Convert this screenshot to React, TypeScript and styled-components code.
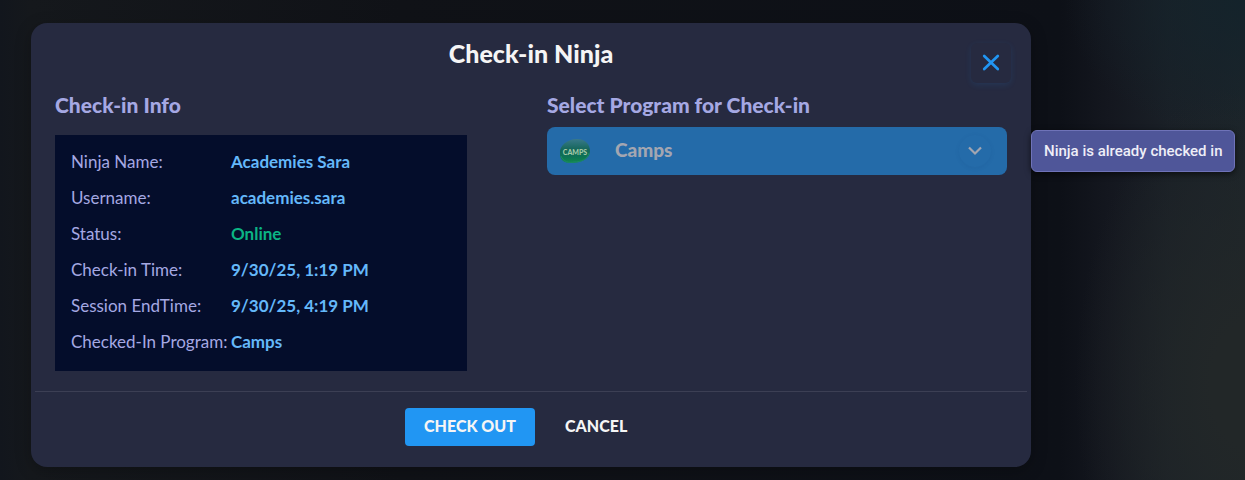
import React from "react";
import styled, { createGlobalStyle } from "styled-components";

const GlobalStyle = createGlobalStyle`
  * { box-sizing: border-box; }
  html, body { margin: 0; background: #101319; }
  body, button, select { font-family: Lato, "Open Sans", sans-serif; }
`;

const Page = styled.main`
  min-height: 100vh;
  padding: 23px 31px 13px;
  overflow: hidden;
  background:
    radial-gradient(ellipse 180px 140px at 100% 0, #14232b, transparent),
    radial-gradient(ellipse 170px 300px at 100% 80%, #222728 20%, transparent),
    linear-gradient(90deg, #12161d 0, #15181c 30px, #101217 400px, #0d1017 1060px, #14171f 1110px, #1a2027 1170px, #1c242a 100%);
`;

const Dialog = styled.section`
  position: relative;
  width: 100%;
  max-width: 1000px;
  padding: 0 4px;
  border-radius: 16px;
  background: #262a40;
  box-shadow: 0 4px 16px rgba(0, 0, 0, 0.25);
`;

const Title = styled.h1`
  margin: 0;
  padding-top: 12px;
  color: #f5f5f5;
  font-size: 25px;
  line-height: 36px;
  font-weight: 900;
  text-align: center;
`;

const CloseButton = styled.button`
  position: absolute;
  top: 20px;
  right: 20px;
  display: grid;
  place-items: center;
  width: 40px;
  height: 40px;
  padding: 0;
  border: 0;
  border-radius: 6px;
  background: #262a40;
  color: #2196f3;
  box-shadow: 0 2px 6px rgba(33, 150, 243, 0.12);
`;

const Body = styled.div`
  display: grid;
  grid-template-columns: 412fr 460fr;
  gap: 80px;
  padding: 20px 20px;
`;

const Heading = styled.h2`
  margin: 0;
  color: #a5a8e3;
  font-size: 21px;
  line-height: 28px;
  font-weight: 900;
`;

const InfoList = styled.dl`
  margin: 16px 0 0;
  padding: 9px 16px 11px;
  background: #040d2b;
`;

const InfoRow = styled.div`
  display: grid;
  grid-template-columns: 160px 1fr;
  font-size: 17px;
  line-height: 36px;
  white-space: nowrap;
`;

const Term = styled.dt`
  color: #a5a8e3;
`;

const Value = styled.dd<{ $online?: boolean }>`
  margin: 0;
  color: ${(p) => (p.$online ? "#0bb484" : "#64b8fa")};
  font-weight: 700;
`;

const SelectBox = styled.div`
  position: relative;
  margin-top: 8px;
`;

const ProgramSelect = styled.select`
  display: block;
  width: 100%;
  height: 48px;
  padding: 0 48px 4px 68px;
  border: 0;
  border-radius: 8px;
  appearance: none;
  background: #246ba9;
  color: #a3a6b1;
  font-size: 19px;
  font-weight: 900;
  opacity: 1;
`;

const ProgramLogo = styled.svg`
  position: absolute;
  top: 10px;
  left: 12px;
  pointer-events: none;
`;

const ArrowDisc = styled.span`
  position: absolute;
  top: 8px;
  right: 16px;
  display: grid;
  place-items: center;
  width: 32px;
  height: 32px;
  border-radius: 50%;
  box-shadow: 0 1px 4px rgba(20, 60, 110, 0.1);
  pointer-events: none;
`;

const Footer = styled.footer`
  display: flex;
  justify-content: center;
  gap: 20px;
  padding: 16px 0 21px;
  border-top: 1px solid #3c3f54;
`;

const Action = styled.button<{ $primary?: boolean }>`
  min-width: ${(p) => (p.$primary ? "130px" : "102px")};
  height: 38px;
  padding: 0 10px 4px;
  border: 0;
  border-radius: 4px;
  background: ${(p) => (p.$primary ? "#2196f3" : "transparent")};
  color: #f5f5f5;
  font-size: 16px;
  font-weight: 900;
  text-align: ${(p) => (p.$primary ? "center" : "left")};
`;

const Tooltip = styled.div`
  position: absolute;
  top: 107px;
  left: 100%;
  padding: 10px 12px;
  border: 1px solid #6f73b8;
  border-radius: 6px;
  background: #4f5699;
  color: #eeeef7;
  box-shadow: 0 2px 6px rgba(0, 0, 0, 0.6);
  font-family: Roboto, sans-serif;
  font-size: 15px;
  line-height: 20px;
  font-weight: 500;
  white-space: nowrap;
`;

const info = [
  { label: "Ninja Name:", value: "Academies Sara" },
  { label: "Username:", value: "academies.sara" },
  { label: "Status:", value: "Online", online: true },
  { label: "Check-in Time:", value: "9/30/25, 1:19 PM" },
  { label: "Session EndTime:", value: "9/30/25, 4:19 PM" },
  { label: "Checked-In Program:", value: "Camps" },
];

export default function App() {
  return (
    <>
      <GlobalStyle />
      <Page>
        <Dialog role="dialog" aria-labelledby="dialog-title">
          <Title id="dialog-title">Check-in Ninja</Title>
          <CloseButton type="button" aria-label="Close">
            <svg width="18" height="18" viewBox="0 0 18 18" fill="none" stroke="currentColor" strokeWidth="2.7" strokeLinecap="round">
              <path d="M2.2 2 15.8 15M15.8 2 2.2 15" />
            </svg>
          </CloseButton>
          <Body>
            <div>
              <Heading>Check-in Info</Heading>
              <InfoList>
                {info.map((row) => (
                  <InfoRow key={row.label}>
                    <Term>{row.label}</Term>
                    <Value $online={row.online}>{row.value}</Value>
                  </InfoRow>
                ))}
              </InfoList>
            </div>
            <div>
              <Heading as="label" htmlFor="program">Select Program for Check-in</Heading>
              <SelectBox>
                <ProgramSelect id="program" disabled defaultValue="camps">
                  <option value="camps">Camps</option>
                </ProgramSelect>
                <ProgramLogo width="34" height="30" viewBox="0 0 34 30" aria-hidden="true">
                  <defs>
                    <linearGradient id="pebble" x1="0" y1="0" x2="0" y2="1">
                      <stop offset="0" stopColor="#39798a" />
                      <stop offset="0.45" stopColor="#146659" />
                      <stop offset="0.75" stopColor="#0d7355" />
                      <stop offset="1" stopColor="#128a4c" />
                    </linearGradient>
                  </defs>
                  <path d="M1 17C0 9 8 2 18 2C27 2 31 8 31 14C31 22 22 26 12 26C5 26 1 23 1 17Z" fill="url(#pebble)" />
                  <path d="M2 19C4 25 10 26 15 25C22 25 29 22 30 16" fill="none" stroke="#1c8a63" strokeWidth="1" />
                  <text x="16" y="18" textAnchor="middle" fill="#a3c9a8" fontFamily="Lato, sans-serif" fontSize="7" fontWeight="900">CAMPS</text>
                </ProgramLogo>
                <ArrowDisc aria-hidden="true">
                  <svg width="14" height="10" viewBox="0 0 14 10" fill="none" stroke="#a3a6b1" strokeWidth="2.2">
                    <path d="M1 1.5 7 7.5 13 1.5" />
                  </svg>
                </ArrowDisc>
              </SelectBox>
            </div>
          </Body>
          <Footer>
            <Action type="button" $primary>CHECK OUT</Action>
            <Action type="button">CANCEL</Action>
          </Footer>
          <Tooltip role="tooltip">Ninja is already checked in</Tooltip>
        </Dialog>
      </Page>
    </>
  );
}
